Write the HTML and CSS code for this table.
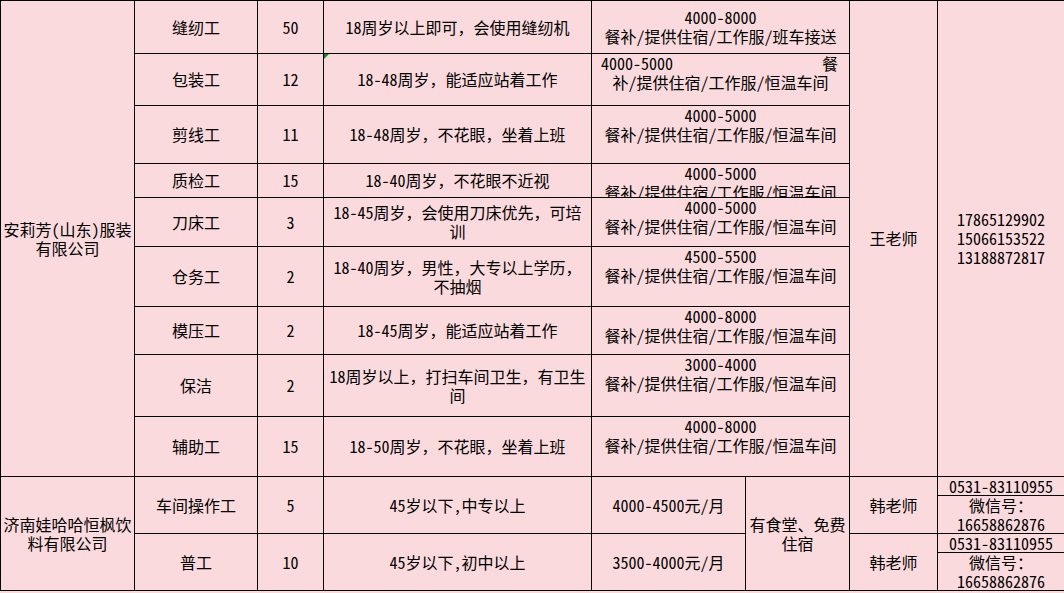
FILE: index.html
```html
<!DOCTYPE html>
<html lang="zh-CN">
<head>
<meta charset="utf-8">
<title>招聘信息</title>
<link rel="stylesheet" href="styles.css">
</head>
<body>
<div class="sheet">
  <div class="c co1">安莉芳(山东)服装<br>有限公司</div>
  <div class="c ct1">王老师</div>
  <div class="c ph1">17865129902<br>15066153522<br>13188872817</div>

  <div class="c">缝纫工</div>
  <div class="c">50</div>
  <div class="c fw"><span><span class="n">18</span>周岁以上即可，会使用缝纫机</span></div>
  <div class="c ben mid"><div>4000-8000</div><div>餐补/提供住宿/工作服/班车接送</div></div>

  <div class="c">包装工</div>
  <div class="c">12</div>
  <div class="c fw flag"><span class="tri"></span><span><span class="n">18-48</span>周岁，能适应站着工作</span></div>
  <div class="c ben"><div class="split"><span>4000-5000</span><span>餐</span></div><div>补/提供住宿/工作服/恒温车间</div></div>

  <div class="c">剪线工</div>
  <div class="c">11</div>
  <div class="c fw"><span><span class="n">18-48</span>周岁，不花眼，坐着上班</span></div>
  <div class="c ben"><div>4000-5000</div><div>餐补/提供住宿/工作服/恒温车间</div></div>

  <div class="c">质检工</div>
  <div class="c">15</div>
  <div class="c fw"><span><span class="n">18-40</span>周岁，不花眼不近视</span></div>
  <div class="c ben"><div>4000-5000</div><div>餐补/提供住宿/工作服/恒温车间</div></div>

  <div class="c">刀床工</div>
  <div class="c">3</div>
  <div class="c fw"><span><span class="n">18-45</span>周岁，会使用刀床优先，可培</span><span>训</span></div>
  <div class="c ben"><div>4000-5000</div><div>餐补/提供住宿/工作服/恒温车间</div></div>

  <div class="c">仓务工</div>
  <div class="c">2</div>
  <div class="c fw"><span><span class="n">18-40</span>周岁，男性，大专以上学历，</span><span>不抽烟</span></div>
  <div class="c ben"><div>4500-5500</div><div>餐补/提供住宿/工作服/恒温车间</div></div>

  <div class="c">模压工</div>
  <div class="c">2</div>
  <div class="c fw"><span><span class="n">18-45</span>周岁，能适应站着工作</span></div>
  <div class="c ben"><div>4000-8000</div><div>餐补/提供住宿/工作服/恒温车间</div></div>

  <div class="c">保洁</div>
  <div class="c">2</div>
  <div class="c fw"><span><span class="n">18</span>周岁以上，打扫车间卫生，有卫生</span><span>间</span></div>
  <div class="c ben"><div>3000-4000</div><div>餐补/提供住宿/工作服/恒温车间</div></div>

  <div class="c">辅助工</div>
  <div class="c">15</div>
  <div class="c fw"><span><span class="n">18-50</span>周岁，不花眼，坐着上班</span></div>
  <div class="c ben"><div>4000-8000</div><div>餐补/提供住宿/工作服/恒温车间</div></div>

  <div class="c co2">济南娃哈哈恒枫饮<br>料有限公司</div>

  <div class="c r2">车间操作工</div>
  <div class="c r2">5</div>
  <div class="c r2">45岁以下,中专以上</div>
  <div class="c r2">4000-4500元/月</div>
  <div class="c r4">有食堂、免费<br>住宿</div>
  <div class="c r2">韩老师</div>
  <div class="c">0531-83110955</div>
  <div class="c fw"><span>微信号：</span><span class="n">16658862876</span></div>

  <div class="c r2">普工</div>
  <div class="c r2">10</div>
  <div class="c r2">45岁以下,初中以上</div>
  <div class="c r2">3500-4000元/月</div>
  <div class="c r2">韩老师</div>
  <div class="c">0531-83110955</div>
  <div class="c fw"><span>微信号：</span><span class="n">16658862876</span></div>
</div>
</body>
</html>
```

FILE: styles.css
```css
html, body {
  margin: 0;
  padding: 0;
  background: #fadadd;
}

body {
  font-family: "Noto Sans CJK SC", "Noto Sans CJK JP", sans-serif;
  font-size: 16px;
  color: #000;
  font-feature-settings: "hwid" 1;
  overflow: hidden;
}

.sheet {
  box-sizing: border-box;
  width: 1064px;
  display: grid;
  grid-template-columns: 133px 122px 65px 267px 153px 103px 87px 1fr;
  grid-template-rows: 52px 51px 57px 33px 48px 59px 47px 61px 59px 18px 37px 18px 37px;
  gap: 1px;
  padding: 1px 0 1px 1px;
  background: #000;
}

.c {
  background: #fadadd;
  display: flex;
  flex-direction: column;
  justify-content: center;
  align-items: center;
  text-align: center;
  line-height: 19px;
  white-space: nowrap;
  overflow: hidden;
}

/* full-width punctuation stays full-width; digit runs get half-width forms */
.fw { font-feature-settings: normal; }
.n { font-feature-settings: "hwid" 1; }

.co1 { grid-column: 1; grid-row: 1 / 10; }
.ct1 { grid-column: 7; grid-row: 1 / 10; }
.ph1 { grid-column: 8; grid-row: 1 / 10; }
.co2 { grid-column: 1; grid-row: 10 / 14; }

.r2 { grid-row: span 2; }
.r4 { grid-row: span 4; }

.ben {
  grid-column: span 2;
  justify-content: flex-start;
}
.ben.mid { justify-content: center; }

.split {
  align-self: stretch;
  display: flex;
  justify-content: space-between;
  padding: 0 11px 0 9px;
}

.flag { position: relative; }
.tri {
  position: absolute;
  left: 0;
  top: 0;
  width: 0;
  height: 0;
  border-top: 5px solid #138a13;
  border-right: 5px solid transparent;
}
```
